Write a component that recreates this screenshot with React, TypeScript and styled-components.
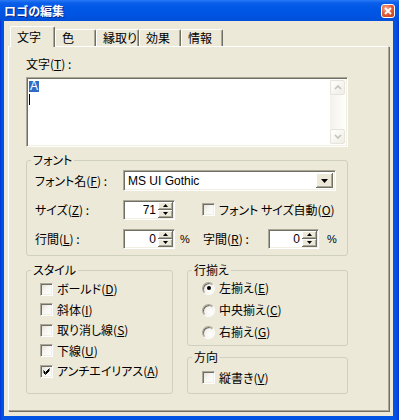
import React from "react";
import styled, { createGlobalStyle, css } from "styled-components";

const FONT = `"Noto Sans CJK JP", "Noto Sans", "Liberation Sans", sans-serif`;

const GlobalStyle = createGlobalStyle`
  html, body {
    margin: 0;
    padding: 0;
    background: #0054e3;
  }
  body {
    font-family: ${FONT};
    font-size: 12px;
  }
`;

const sunken = css`
  box-sizing: border-box;
  border: 1px solid;
  border-color: #aca899 #ffffff #ffffff #aca899;
  box-shadow: inset 1px 1px 0 #716f64, inset -1px -1px 0 #f1efe2;
`;

const raised = css`
  box-sizing: border-box;
  background: #ece9d8;
  box-shadow: inset -1px -1px 0 #716f64, inset 1px 1px 0 #ffffff,
    inset -2px -2px 0 #aca899;
`;

const Window = styled.div`
  width: 399px;
  height: 420px;
  display: flex;
  flex-direction: column;
  background: linear-gradient(to right, #0831d9 0, #0054e3 2px, #0054e3 396px, #0831d9 399px);
  font-family: ${FONT};
  font-size: 12px;
  font-feature-settings: "palt";
  color: #000;
`;

const TitleBar = styled.div`
  height: 21px;
  flex: none;
  display: flex;
  align-items: center;
  justify-content: space-between;
  padding: 0 4px 0 4px;
  background: linear-gradient(
    to bottom,
    #2a7af5 0,
    #0a5ee9 3px,
    #0058e6 8px,
    #0054e3 15px,
    #004fd8 21px
  );
`;

const Title = styled.div`
  color: #fff;
  font-weight: bold;
  font-size: 12px;
  line-height: 14px;
  text-shadow: 1px 1px 0 #0a1f80;
`;

const CloseButton = styled.div`
  width: 14px;
  height: 14px;
  box-sizing: border-box;
  border: 1px solid #fff;
  border-radius: 3px;
  background: radial-gradient(circle at 35% 30%, #f4b29a 0, #e5603a 45%, #c23c12 100%);
  display: flex;
  align-items: center;
  justify-content: center;
`;

const Body = styled.div`
  flex: 1;
  display: flex;
  flex-direction: column;
  margin: 0 6px 4px 4px;
  padding: 5px 4px 5px 4px;
  background: #ece9d8;
`;

const TabRow = styled.div`
  height: 20px;
  flex: none;
  display: flex;
  align-items: flex-end;
  padding-left: 2px;
`;

const Tab = styled.div<{ $w: number; $active?: boolean }>`
  width: ${(p) => p.$w}px;
  height: ${(p) => (p.$active ? 21 : 17)}px;
  margin-bottom: ${(p) => (p.$active ? -1 : 0)}px;
  position: relative;
  z-index: ${(p) => (p.$active ? 1 : 0)};
  box-sizing: border-box;
  padding-left: 6px;
  line-height: ${(p) => (p.$active ? 20 : 16)}px;
  background: #ece9d8;
  border-top: 1px solid #fff;
  border-left: 1px solid #fff;
  border-right: 1px solid #716f64;
  box-shadow: inset -1px 0 0 #aca899;
  border-radius: 2px 2px 0 0;
`;

const Panel = styled.div`
  flex: 1;
  box-sizing: border-box;
  padding: 10px 0 0 17px;
  border-top: 1px solid #fff;
  border-left: 1px solid #fff;
  border-right: 1px solid #aca899;
  border-bottom: 1px solid #aca899;
  box-shadow: 1px 1px 0 #716f64;
`;

const FieldLabel = styled.div`
  line-height: 14px;
  height: 14px;
`;

const TextBox = styled.div`
  ${sunken};
  width: 322px;
  height: 70px;
  margin-top: 6px;
  padding: 2px;
  background: #fff;
  display: flex;
`;

const TextContent = styled.div`
  flex: 1;
  padding: 1px 0 0 0;
`;

const TextLine = styled.div`
  height: 12px;
  line-height: 12px;
  display: flex;
  align-items: flex-start;
`;

const Selected = styled.span`
  background: #316ac5;
  color: #fff;
  font-family: "Liberation Sans", sans-serif;
  padding: 0 1px;
  height: 11px;
  line-height: 11px;
`;

const Caret = styled.span`
  width: 1px;
  height: 11px;
  margin-top: 1px;
  background: #000;
`;

const ScrollBar = styled.div`
  width: 15px;
  display: flex;
  flex-direction: column;
  background: linear-gradient(to right, #f3f1ec, #fefefb);
`;

const ScrollButton = styled.div`
  height: 15px;
  box-sizing: border-box;
  border: 1px solid #e6e4db;
  border-radius: 2px;
  background: linear-gradient(135deg, #ffffff, #eeede5);
  display: flex;
  align-items: center;
  justify-content: center;
`;

const ScrollTrack = styled.div`
  flex: 1;
`;

const Group = styled.fieldset<{ $mt?: number; $w?: number }>`
  margin: ${(p) => p.$mt ?? 0}px 0 0 0;
  padding: 0;
  min-width: 0;
  width: ${(p) => (p.$w ? `${p.$w}px` : "auto")};
  box-sizing: border-box;
  border: 1px solid #d0d0bf;
  border-radius: 3px;
`;

const Legend = styled.legend`
  margin-left: 4px;
  padding: 0 2px;
  line-height: 14px;
  height: 14px;
`;

const FontRows = styled.div`
  display: flex;
  flex-direction: column;
  gap: 8px;
  padding: 3px 0 6px 8px;
`;

const Row = styled.div`
  height: 21px;
  display: flex;
  align-items: center;
  line-height: 14px;
`;

const RowLabel = styled.div<{ $w: number }>`
  width: ${(p) => p.$w}px;
  flex: none;
`;

const Combo = styled.div`
  ${sunken};
  width: 213px;
  height: 21px;
  padding: 2px;
  background: #fff;
  display: flex;
  align-items: center;
`;

const ComboText = styled.div`
  flex: 1;
  padding-left: 2px;
  font-family: "Liberation Sans", sans-serif;
  font-size: 12px;
`;

const ComboButton = styled.div`
  ${raised};
  width: 17px;
  height: 15px;
  display: flex;
  align-items: center;
  justify-content: center;
`;

const Spin = styled.div<{ $w: number }>`
  ${sunken};
  width: ${(p) => p.$w}px;
  height: 20px;
  padding: 1px;
  background: #fff;
  display: flex;
`;

const SpinValue = styled.div`
  flex: 1;
  text-align: right;
  padding-right: 2px;
  line-height: 16px;
  font-family: "Liberation Sans", sans-serif;
`;

const SpinButtons = styled.div`
  width: 15px;
  display: flex;
  flex-direction: column;
`;

const SpinButton = styled.div`
  ${raised};
  flex: 1;
  display: flex;
  align-items: center;
  justify-content: center;
`;

const Unit = styled.div<{ $w?: number; $pl: number }>`
  width: ${(p) => (p.$w ? `${p.$w}px` : "auto")};
  box-sizing: border-box;
  padding-left: ${(p) => p.$pl}px;
  flex: none;
  font-family: "Liberation Sans", sans-serif;
  font-size: 11px;
`;

const CheckItem = styled.div<{ $ml?: number }>`
  display: flex;
  align-items: center;
  gap: 4px;
  margin-left: ${(p) => p.$ml ?? 0}px;
  line-height: 14px;
`;

const Box = styled.span`
  ${sunken};
  width: 13px;
  height: 13px;
  flex: none;
  display: flex;
  align-items: center;
  justify-content: center;
  background: linear-gradient(135deg, #dcdad2 0, #f6f5f0 45%, #ffffff 100%);
`;

const Radio = styled.span`
  width: 13px;
  height: 13px;
  flex: none;
  box-sizing: border-box;
  border-radius: 50%;
  border: 1px solid;
  border-color: #aca899 #fff #fff #aca899;
  box-shadow: inset 1px 1px 0 #716f64;
  background: radial-gradient(circle at 65% 65%, #ffffff 0, #f4f3ee 50%, #dcdad2 100%);
  display: flex;
  align-items: center;
  justify-content: center;
`;

const Dot = styled.span`
  width: 4px;
  height: 4px;
  border-radius: 50%;
  background: #000;
`;

const BottomRow = styled.div`
  display: grid;
  grid-template-columns: 147px 161px;
  column-gap: 14px;
  margin-top: 7px;
`;

const RightColumn = styled.div`
  display: flex;
  flex-direction: column;
  gap: 4px;
`;

const ListRows = styled.div<{ $h: number; $pt: number; $pb: number }>`
  display: grid;
  grid-auto-rows: ${(p) => p.$h}px;
  align-items: center;
  padding: ${(p) => p.$pt}px 0 ${(p) => p.$pb}px 13px;
`;

const RightRows = styled(ListRows)`
  padding-left: 14px;
`;

const Check = ({ on }: { on?: boolean }) => (
  <Box>
    {on && (
      <svg width="7" height="7" viewBox="0 0 7 7">
        <path d="M0.5 2.5 L2.5 4.5 L6.5 0.5 M0.5 3.5 L2.5 5.5 L6.5 1.5 M0.5 4.5 L2.5 6.5 L6.5 2.5" stroke="#000" strokeWidth="1" fill="none" />
      </svg>
    )}
  </Box>
);

const Arrow = ({ up, w = 5, h = 3 }: { up?: boolean; w?: number; h?: number }) => (
  <svg width={w} height={h} viewBox={`0 0 ${w} ${h}`}>
    <polygon points={up ? `0,${h} ${w},${h} ${w / 2},0` : `0,0 ${w},0 ${w / 2},${h}`} fill="#000" />
  </svg>
);

const Chevron = ({ up }: { up?: boolean }) => (
  <svg width="8" height="5" viewBox="0 0 8 5">
    <polyline points={up ? "1,4 4,1 7,4" : "1,1 4,4 7,1"} stroke="#c3c1b8" strokeWidth="1.6" fill="none" />
  </svg>
);

const SpinControl = ({ value, w }: { value: string; w: number }) => (
  <Spin $w={w}>
    <SpinValue>{value}</SpinValue>
    <SpinButtons>
      <SpinButton>
        <Arrow up />
      </SpinButton>
      <SpinButton>
        <Arrow />
      </SpinButton>
    </SpinButtons>
  </Spin>
);

const tabs = [
  { label: "文字", w: 45, active: true },
  { label: "色", w: 41 },
  { label: "縁取り", w: 43 },
  { label: "効果", w: 42 },
  { label: "情報", w: 42 },
];

const styles: [string, string, boolean][] = [
  ["ボールド(", "D", false],
  ["斜体(", "I", false],
  ["取り消し線(", "S", false],
  ["下線(", "U", false],
  ["アンチエイリアス(", "A", true],
];

const aligns: [string, string, boolean][] = [
  ["左揃え(", "E", true],
  ["中央揃え(", "C", false],
  ["右揃え(", "G", false],
];

export default function App() {
  return (
    <>
      <GlobalStyle />
      <Window>
        <TitleBar>
          <Title>ロゴの編集</Title>
          <CloseButton>
            <svg width="8" height="8" viewBox="0 0 8 8">
              <path d="M1 1 L7 7 M7 1 L1 7" stroke="#fff" strokeWidth="1.8" />
            </svg>
          </CloseButton>
        </TitleBar>
        <Body>
          <TabRow>
            {tabs.map((t) => (
              <Tab key={t.label} $w={t.w} $active={t.active}>
                {t.label}
              </Tab>
            ))}
          </TabRow>
          <Panel>
            <FieldLabel>
              文字(<u>T</u>)&nbsp;:
            </FieldLabel>
            <TextBox>
              <TextContent>
                <TextLine>
                  <Selected>A</Selected>
                </TextLine>
                <TextLine>
                  <Caret />
                </TextLine>
              </TextContent>
              <ScrollBar>
                <ScrollButton>
                  <Chevron up />
                </ScrollButton>
                <ScrollTrack />
                <ScrollButton>
                  <Chevron />
                </ScrollButton>
              </ScrollBar>
            </TextBox>

            <Group $mt={6} $w={322}>
              <Legend>フォント</Legend>
              <FontRows>
                <Row>
                  <RowLabel $w={88}>
                    フォント名(<u>F</u>)&nbsp;:
                  </RowLabel>
                  <Combo>
                    <ComboText>MS UI Gothic</ComboText>
                    <ComboButton>
                      <Arrow w={7} h={4} />
                    </ComboButton>
                  </Combo>
                </Row>
                <Row>
                  <RowLabel $w={88}>
                    サイズ(<u>Z</u>)&nbsp;:
                  </RowLabel>
                  <SpinControl value="71" w={52} />
                  <CheckItem $ml={27}>
                    <Check />
                    <span>
                      フォント サイズ自動(<u>O</u>)
                    </span>
                  </CheckItem>
                </Row>
                <Row>
                  <RowLabel $w={88}>
                    行間(<u>L</u>)&nbsp;:
                  </RowLabel>
                  <SpinControl value="0" w={52} />
                  <Unit $w={28} $pl={5}>
                    %
                  </Unit>
                  <RowLabel $w={65}>
                    字間(<u>R</u>)&nbsp;:
                  </RowLabel>
                  <SpinControl value="0" w={51} />
                  <Unit $pl={8}>%</Unit>
                </Row>
              </FontRows>
            </Group>

            <BottomRow>
              <Group>
                <Legend>スタイル</Legend>
                <ListRows $h={20.5} $pt={2} $pb={0}>
                  {styles.map(([text, key, on]) => (
                    <CheckItem key={key}>
                      <Check on={on} />
                      <span>
                        {text}
                        <u>{key}</u>)
                      </span>
                    </CheckItem>
                  ))}
                </ListRows>
              </Group>
              <RightColumn>
                <Group>
                  <Legend>行揃え</Legend>
                  <RightRows $h={22} $pt={0} $pb={2}>
                    {aligns.map(([text, key, on]) => (
                      <CheckItem key={key}>
                        <Radio>{on && <Dot />}</Radio>
                        <span>
                          {text}
                          <u>{key}</u>)
                        </span>
                      </CheckItem>
                    ))}
                  </RightRows>
                </Group>
                <Group>
                  <Legend>方向</Legend>
                  <RightRows $h={21} $pt={3} $pb={5}>
                    <CheckItem>
                      <Check />
                      <span>
                        縦書き(<u>V</u>)
                      </span>
                    </CheckItem>
                  </RightRows>
                </Group>
              </RightColumn>
            </BottomRow>
          </Panel>
        </Body>
      </Window>
    </>
  );
}
